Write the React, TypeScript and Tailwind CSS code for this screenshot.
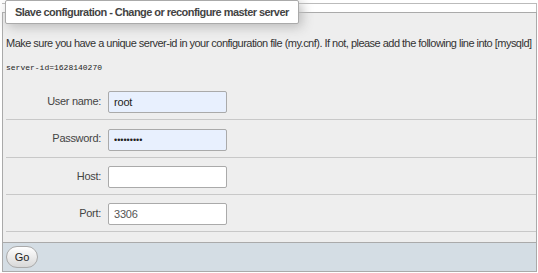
import React from "react";

const rows = [
  { label: "User name:", value: "root", filled: true, pw: false },
  { label: "Password:", value: "•••••••••", filled: true, pw: true },
  { label: "Host:", value: "", filled: false, pw: false },
  { label: "Port:", value: "3306", filled: false, pw: false },
];

export default function App() {
  return (
    <div
      className="w-[538px] h-[273px] bg-white overflow-hidden text-[#333]"
      style={{ fontFamily: '"Liberation Sans", Arial, sans-serif' }}
    >
      <div className="relative pt-[3px] pl-[2px] pr-[1px]">
        <div className="h-[9px] border-t border-r border-[#bbb] bg-white" />
        <div className="border border-b-0 border-[#aaa] bg-[#eeeeee] pl-[3px] pb-[10px]">
          <p className="mt-[23px] text-[11px] leading-[14px] whitespace-nowrap tracking-[-0.52px] text-[#333]">
            Make sure you have a unique server-id in your configuration file (my.cnf). If not, please add the following line into [mysqld]
          </p>
          <div
            className="mt-[12px] text-[8px] leading-[12px] text-[#222]"
            style={{ fontFamily: '"Liberation Mono", "DejaVu Sans Mono", monospace' }}
          >
            server-id=1628140270
          </div>
          <div className="mt-[9px]">
            {rows.map((r, i) => (
              <div
                key={r.label}
                className={`flex items-center border-b border-[#c8c8c8] ${i === 1 ? "h-[38px]" : "h-[37px]"}`}
              >
                <div className="w-[95px] text-right text-[11px] tracking-[-0.3px] text-[#444]">{r.label}</div>
                <div className="ml-[7px]">
                  <input
                    readOnly
                    value={r.value}
                    type="text"
                    className={`w-[119px] h-[22px] rounded-[2px] border border-[#aaa] px-[5px] outline-none ${
                      r.pw ? "text-[9px] tracking-[0px]" : "text-[11px] tracking-[-0.2px]"
                    } ${r.filled ? "bg-[#e8f0fe] text-[#222]" : "bg-white text-[#555]"}`}
                    style={{ fontFamily: '"Liberation Sans", Arial, sans-serif' }}
                  />
                </div>
              </div>
            ))}
          </div>
        </div>
        <div className="border border-[#aaa] bg-[#d4dde4] h-[30px] flex items-center pl-[3px]">
          <button className="h-[22px] w-[32px] rounded-[11px] border border-[#aaa] bg-gradient-to-b from-white to-[#d8d8d8] text-[11px] text-[#222]">
            Go
          </button>
        </div>
        <div className="absolute left-[5px] top-0 h-[24px] px-[9px] flex items-center bg-white border border-[#aaa] rounded-[2px] shadow-[3px_3px_12px_#bbb]">
          <span className="text-[11px] font-bold tracking-[-0.55px] text-[#444] whitespace-nowrap">
            Slave configuration - Change or reconfigure master server
          </span>
        </div>
      </div>
    </div>
  );
}
